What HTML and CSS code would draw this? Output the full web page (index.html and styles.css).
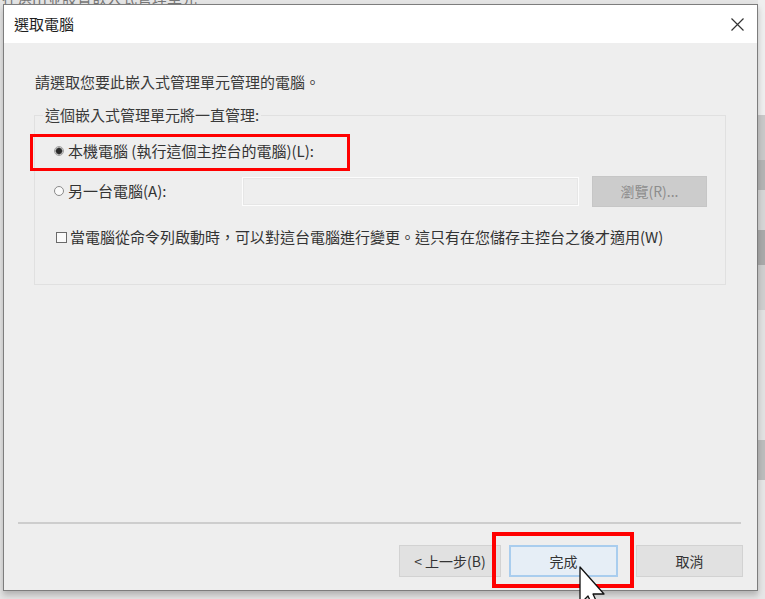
FILE: index.html
```html
<!DOCTYPE html>
<html lang="zh-Hant">
<head>
<meta charset="utf-8">
<title>選取電腦</title>
<link rel="stylesheet" href="styles.css">
</head>
<body>
<div class="desk">
  <div class="bgtext">在選出並設置嵌入式管理單元</div>
  <div class="rightstrip"></div>
  <div class="dialog">
    <div class="titlebar">
      <span class="title">選取電腦</span>
      <svg class="close" width="13" height="13" viewBox="0 0 13 13"><path d="M0.5 0.5 L12.5 12.5 M12.5 0.5 L0.5 12.5" stroke="#333" stroke-width="1.2" fill="none"/></svg>
    </div>
    <div class="content">
      <p class="intro">請選取您要此嵌入式管理單元管理的電腦。</p>
      <fieldset class="group">
        <legend>這個嵌入式管理單元將一直管理:</legend>
        <div class="row r1"><span class="radio checked"></span><span>本機電腦 (執行這個主控台的電腦)(L):</span></div>
        <div class="row r2">
          <div class="lbl"><span class="radio"></span><span>另一台電腦(A):</span></div>
          <div class="input"></div>
          <div class="browse">瀏覽(R)...</div>
        </div>
        <div class="row r3"><span class="check"></span><span>當電腦從命令列啟動時，可以對這台電腦進行變更。這只有在您儲存主控台之後才適用(W)</span></div>
      </fieldset>
    </div>
    <div class="sep"></div>
    <div class="buttons">
      <div class="btn back">&lt; 上一步(B)</div>
      <div class="btn finish">完成</div>
      <div class="btn cancel">取消</div>
    </div>
  </div>
  <div class="mark mark1"></div>
  <div class="mark mark2"></div>
  <svg class="cursor" width="30" height="40" viewBox="0 0 30 40"><path d="M1 1 L1 38 L9 30 L15 43 L20 41 L14 28 L25 28 Z" fill="#fff" stroke="#111" stroke-width="1.3" stroke-linejoin="round"/></svg>
</div>
</body>
</html>
```

FILE: styles.css
```css
html, body {
  margin: 0;
  padding: 0;
}
body {
  width: 765px;
  height: 599px;
  overflow: hidden;
  background: #e4e4e4;
  font-family: "Noto Sans CJK TC", "Noto Sans", sans-serif;
  color: #333;
}
.desk {
  position: relative;
  width: 765px;
  height: 599px;
  padding: 4px 0 0 3px;
  box-sizing: border-box;
}
.bgtext {
  position: absolute;
  left: 2px;
  top: -10px;
  font-size: 15px;
  line-height: 16px;
  color: #777;
}
.rightstrip {
  position: absolute;
  left: 758px;
  top: 0;
  width: 7px;
  height: 599px;
  background: linear-gradient(to bottom, #efefef 0, #efefef 115px, #c9c9c9 115px, #c9c9c9 160px, #b4b4b4 160px, #b4b4b4 190px, #d6d6d6 190px, #d6d6d6 230px, #aaaaaa 230px, #aaaaaa 265px, #cfcfcf 265px, #cfcfcf 310px, #e2e2e2 310px, #e2e2e2 440px, #bdbdbd 440px, #bdbdbd 480px, #e6e6e6 480px);
}
.dialog {
  position: relative;
  width: 755px;
  height: 587px;
  box-sizing: border-box;
  border: 1px solid #7d7d7d;
  background: #eeeeee;
  display: flex;
  flex-direction: column;
  box-shadow: 0 4px 6px rgba(0, 0, 0, 0.22);
}
.titlebar {
  height: 38px;
  flex: none;
  background: #ffffff;
  display: flex;
  align-items: center;
  justify-content: space-between;
  padding: 0 13px 0 10px;
}
.title {
  font-size: 15px;
  color: #1e1e1e;
  line-height: 20px;
}
.content {
  flex: 1;
  padding: 29px 0 0 30px;
  font-size: 15px;
  line-height: 20px;
}
.intro {
  margin: 0;
  padding-left: 1px;
  color: #3a3a3a;
}
.group {
  margin: 13px 0 0 0;
  width: 692px;
  box-sizing: border-box;
  border: 1px solid #e0e0e0;
  padding: 14px 0 37px 19px;
}
.group legend {
  padding: 0 2px;
  margin-left: -11px;
  line-height: 20px;
  color: #3a3a3a;
}
.row {
  display: flex;
  align-items: center;
  color: #333;
}
.r1 {
  height: 24px;
}
.r2 {
  margin-top: 12px;
  height: 32px;
}
.r3 {
  margin-top: 20px;
  height: 20px;
}
.lbl {
  width: 188px;
  display: flex;
  align-items: center;
}
.radio {
  width: 8px;
  height: 8px;
  border-radius: 50%;
  border: 1px solid #8a8a8a;
  background: #fafafa;
  margin-right: 4px;
  flex: none;
  box-sizing: content-box;
}
.radio.checked {
  background: radial-gradient(circle, #2a2a2a 0, #2a2a2a 2.5px, #9a9a9a 3.5px, #f2f2f2 4px);
  border-color: #a0a0a0;
}
.input {
  width: 337px;
  height: 29px;
  box-sizing: border-box;
  border: 1px solid #fcfcfc;
  box-shadow: inset 0 0 0 1px #e6e6e6;
  background: #eeeeee;
}
.browse {
  margin-left: 13px;
  width: 115px;
  height: 31px;
  box-sizing: border-box;
  border: 1px solid #c6c6c6;
  background: #cccccc;
  color: #8d8d8d;
  font-size: 14px;
  display: flex;
  align-items: center;
  justify-content: center;
}
.check {
  width: 9px;
  height: 9px;
  border: 1px solid #6a6a6a;
  background: #fafafa;
  margin-left: 2px;
  margin-right: 3px;
  flex: none;
}
.sep {
  height: 2px;
  flex: none;
  margin: 0 16px 0 14px;
  background: #cdcdcd;
}
.buttons {
  flex: none;
  display: flex;
  justify-content: flex-end;
  padding: 21px 14px 13px 0;
}
.btn {
  height: 32px;
  box-sizing: border-box;
  border: 1px solid #d2d2d2;
  background: #e1e1e1;
  display: flex;
  align-items: center;
  justify-content: center;
  font-size: 14px;
  color: #333;
}
.back {
  width: 102px;
  margin-right: 8px;
}
.finish {
  width: 109px;
  margin-right: 18px;
  background: #e6eef6;
  border: 2px solid #a9cdee;
}
.cancel {
  width: 107px;
}
.mark {
  position: absolute;
  border: 3px solid #ff0000;
  box-sizing: border-box;
}
.mark1 {
  left: 30px;
  top: 134px;
  width: 320px;
  height: 37px;
}
.mark2 {
  left: 492px;
  top: 532px;
  width: 142px;
  height: 56px;
  border-width: 4px;
}
.cursor {
  position: absolute;
  left: 579px;
  top: 566px;
}
```
